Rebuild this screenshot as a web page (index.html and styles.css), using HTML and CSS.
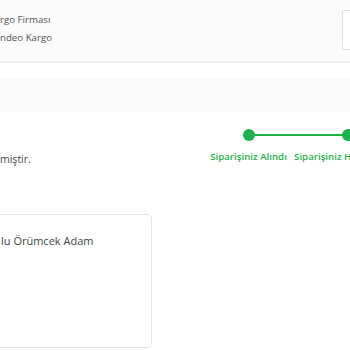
FILE: index.html
```html
<!DOCTYPE html>
<html lang="tr">
<head>
  <meta charset="UTF-8" />
  <meta name="viewport" content="width=device-width, initial-scale=1.0" />
  <link rel="stylesheet" href="styles.css">
</head>
<body>
  <div class="cargo-bar">
    <div class="cargo-info">
      <div class="cargo-label">rgo Firması</div>
      <div class="cargo-name">ndeo Kargo</div>
    </div>
    <div class="cargo-box"></div>
  </div>

  <div class="band"></div>

  <div class="status-row">
    <p class="status-text">miştir.</p>
    <ol class="stepper">
      <li class="step done">
        <span class="dot"></span>
        <span class="step-label">Siparişiniz Alındı</span>
      </li>
      <li class="step done">
        <span class="dot"></span>
        <span class="step-label">Siparişiniz Hazırlanıyor</span>
      </li>
    </ol>
  </div>

  <div class="product-card">
    <div class="product-name">lu Örümcek Adam</div>
  </div>
</body>
</html>
```

FILE: styles.css
```css
body {
  margin: 0;
  width: 350px;
  height: 350px;
  overflow: hidden;
  background: #fff;
  font-family: "Open Sans", "Noto Sans", sans-serif;
  color: #4a4a4a;
}

.cargo-bar {
  display: flex;
  justify-content: space-between;
  height: 63px;
  background: #fafafa;
  border-bottom: 2px solid #ececec;
  box-sizing: border-box;
}

.cargo-info {
  padding-top: 11px;
  font-size: 9.7px;
  line-height: 18px;
  color: #555;
}

.cargo-box {
  width: 30px;
  height: 38px;
  margin-top: 10px;
  margin-right: -24px;
  background: #fff;
  border: 1px solid #dedede;
  border-radius: 3px;
}

.band {
  height: 35px;
  margin-top: 14px;
  background: #fafafa;
}

.status-row {
  display: flex;
  justify-content: space-between;
  align-items: flex-start;
  margin-top: 17px;
}

.status-text {
  margin: 0;
  padding-top: 23px;
  font-size: 10.5px;
  color: #444;
}

.stepper {
  display: grid;
  grid-template-columns: repeat(2, 99px);
  margin: 0 -47px 0 0;
  padding: 0;
  list-style: none;
}

.step {
  position: relative;
  display: flex;
  flex-direction: column;
  align-items: center;
}

.step + .step::before {
  content: "";
  position: absolute;
  top: 5px;
  right: 50%;
  width: 99px;
  height: 2px;
  background: #1db24b;
}

.dot {
  position: relative;
  width: 12px;
  height: 12px;
  border-radius: 50%;
  background: #1db24b;
}

.step-label {
  margin-top: 9px;
  font-size: 9.7px;
  font-weight: 600;
  color: #1db24b;
  white-space: nowrap;
}

.product-card {
  width: 161px;
  height: 134px;
  margin: 48px 0 0 -9px;
  padding: 18px 0 0 9px;
  box-sizing: border-box;
  border: 1px solid #e6e6e6;
  border-radius: 5px;
}

.product-name {
  font-size: 11px;
  color: #444;
}
```
